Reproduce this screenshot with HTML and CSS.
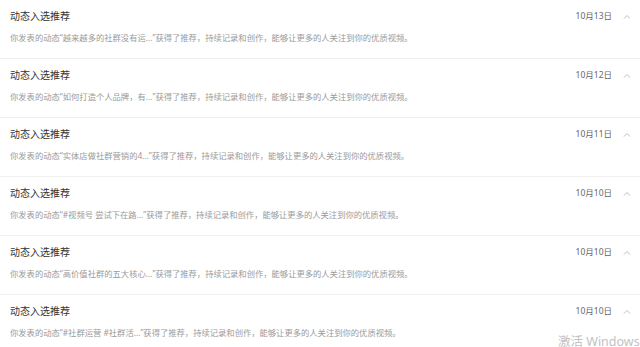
FILE: index.html
```html
<!DOCTYPE html>
<html lang="zh-CN">
<head>
<meta charset="utf-8">
<link rel="stylesheet" href="styles.css">
</head>
<body>
<ul class="list">
  <li class="item">
    <div class="head"><span class="title">动态入选推荐</span><span class="date">10月13日</span><svg class="chev" viewBox="0 0 8 5"><path d="M1 4.5L4 1.5L7 4.5"/></svg></div>
    <p class="desc">你发表的动态“越来越多的社群没有运...”获得了推荐，持续记录和创作，能够让更多的人关注到你的优质视频。</p>
  </li>
  <li class="item">
    <div class="head"><span class="title">动态入选推荐</span><span class="date">10月12日</span><svg class="chev" viewBox="0 0 8 5"><path d="M1 4.5L4 1.5L7 4.5"/></svg></div>
    <p class="desc">你发表的动态“如何打造个人品牌，有...”获得了推荐，持续记录和创作，能够让更多的人关注到你的优质视频。</p>
  </li>
  <li class="item">
    <div class="head"><span class="title">动态入选推荐</span><span class="date">10月11日</span><svg class="chev" viewBox="0 0 8 5"><path d="M1 4.5L4 1.5L7 4.5"/></svg></div>
    <p class="desc">你发表的动态“实体店做社群营销的4...”获得了推荐，持续记录和创作，能够让更多的人关注到你的优质视频。</p>
  </li>
  <li class="item">
    <div class="head"><span class="title">动态入选推荐</span><span class="date">10月10日</span><svg class="chev" viewBox="0 0 8 5"><path d="M1 4.5L4 1.5L7 4.5"/></svg></div>
    <p class="desc">你发表的动态“#视频号 尝试下在路...”获得了推荐，持续记录和创作，能够让更多的人关注到你的优质视频。</p>
  </li>
  <li class="item">
    <div class="head"><span class="title">动态入选推荐</span><span class="date">10月10日</span><svg class="chev" viewBox="0 0 8 5"><path d="M1 4.5L4 1.5L7 4.5"/></svg></div>
    <p class="desc">你发表的动态“高价值社群的五大核心...”获得了推荐，持续记录和创作，能够让更多的人关注到你的优质视频。</p>
  </li>
  <li class="item">
    <div class="head"><span class="title">动态入选推荐</span><span class="date">10月10日</span><svg class="chev" viewBox="0 0 8 5"><path d="M1 4.5L4 1.5L7 4.5"/></svg></div>
    <p class="desc">你发表的动态“#社群运营 #社群活...”获得了推荐，持续记录和创作，能够让更多的人关注到你的优质视频。</p>
  </li>
</ul>
<div class="watermark">激活 Windows</div>
</body>
</html>
```

FILE: styles.css
```css
html, body {
  margin: 0;
  padding: 0;
  background: #fff;
  overflow: hidden;
  height: 347px;
}
body {
  font-family: "Noto Sans", "Noto Sans CJK SC", sans-serif;
  position: relative;
}
.list {
  list-style: none;
  margin: 0;
  padding: 0;
}
.item {
  border-bottom: 1px solid #efefef;
  padding: 9px 0 0 10px;
  box-sizing: border-box;
  height: 59px;
}
.head {
  display: flex;
  align-items: center;
  height: 14px;
}
.title {
  font-size: 10px;
  color: #333;
  line-height: 14px;
  flex: 1;
}
.date {
  font-size: 8.5px;
  color: #666;
  line-height: 14px;
  margin-right: 11px;
}
.chev {
  width: 8px;
  height: 5px;
  margin-right: 9px;
  fill: none;
  stroke: #b5b5b5;
  stroke-width: 0.9;
}
.desc {
  margin: 9px 0 0;
  font-size: 8.3px;
  line-height: 12px;
  color: #9a9a9a;
  white-space: nowrap;
}
.watermark {
  position: absolute;
  left: 558px;
  top: 334px;
  font-size: 12.5px;
  line-height: 16px;
  color: #c2c2c2;
  white-space: nowrap;
}
```
